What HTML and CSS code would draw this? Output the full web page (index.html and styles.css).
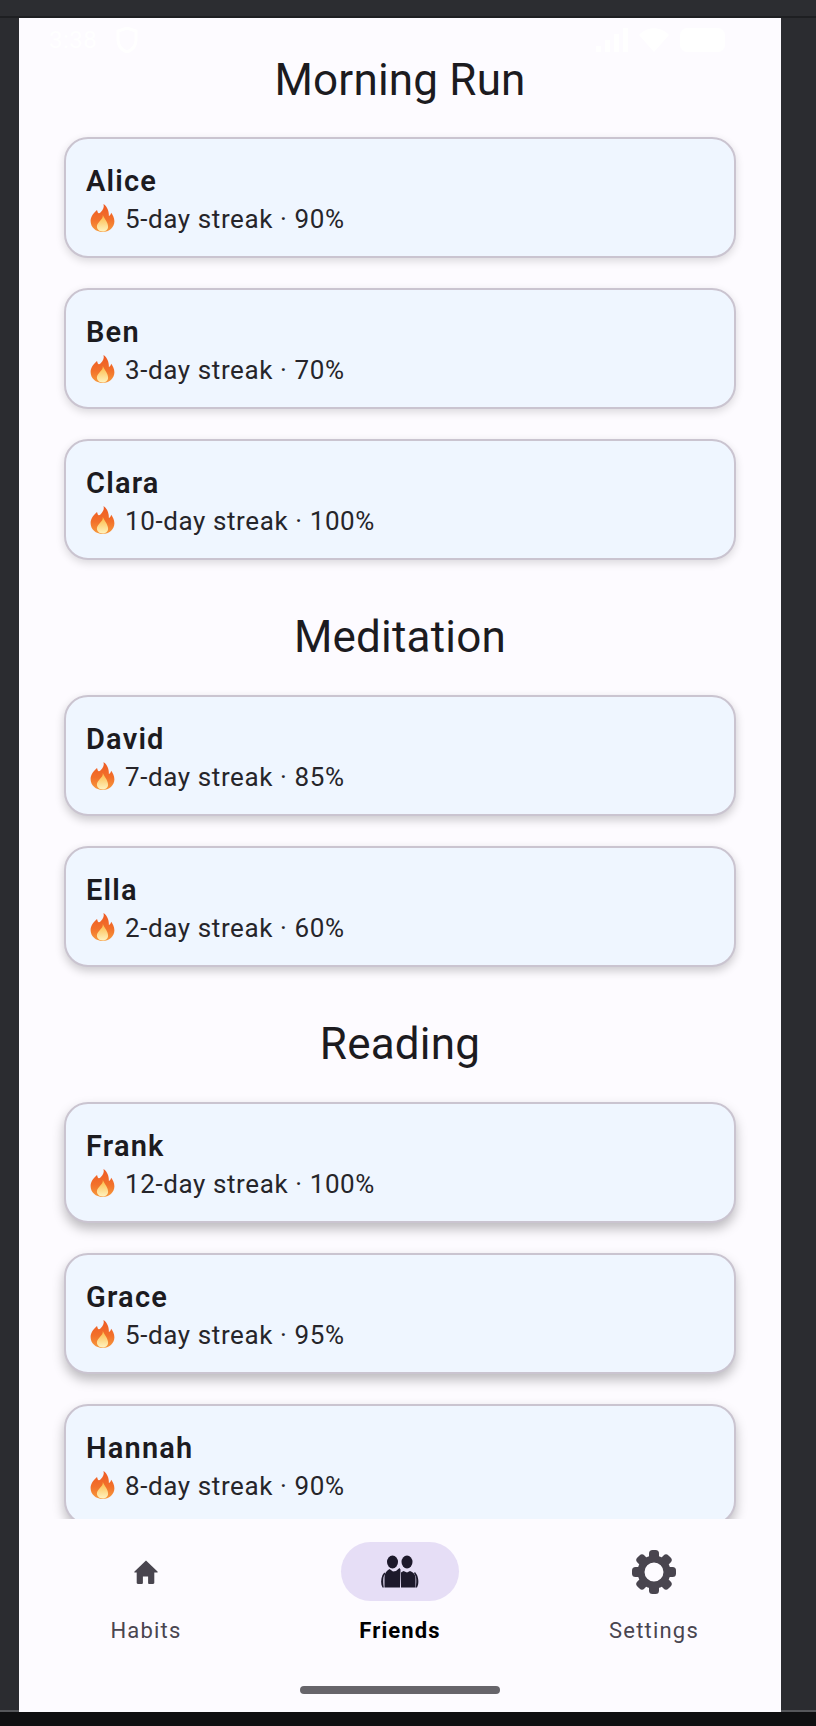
FILE: index.html
```html
<!DOCTYPE html>
<html lang="en">
<head>
<meta charset="utf-8">
<title>Friends</title>
<link rel="stylesheet" href="styles.css">
</head>
<body>
<svg class="defs" width="0" height="0" aria-hidden="true">
  <defs>
    <linearGradient id="flame" x1="0" y1="0" x2="0" y2="1">
      <stop offset="0" stop-color="#ee5a24"/>
      <stop offset="0.55" stop-color="#f2702a"/>
      <stop offset="1" stop-color="#f79a3c"/>
    </linearGradient>
    <linearGradient id="core" x1="0" y1="0" x2="0" y2="1">
      <stop offset="0" stop-color="#fcb843"/>
      <stop offset="1" stop-color="#fff3c0"/>
    </linearGradient>
    <symbol id="fire" viewBox="0 0 25 28">
      <path fill="url(#flame)" d="M13.5 0c.9 3.4-.4 5.6-2.600 8C9.600 9.400 8.400 10 7.700 8.200 7.400 7.400 7.300 6.800 7 6 3.400 9 .6 12.700.6 17.100.6 23.500 5.800 28 12.500 28s11.900-4.500 11.900-10.700c0-3.800-1.700-6.200-3.200-8.500-.4 1.600-1 2.700-2.300 3.300C19 7.200 17.400 2.700 13.500 0z"/>
      <path fill="url(#core)" d="M12.800 11c.3 2.800-1.300 4.300-3.100 6.300-1.400 1.600-2.800 3.200-2.800 5.300 0 3 2.500 4.900 5.600 4.900s5.600-1.900 5.600-4.800c0-3.900-3.100-7.100-5.300-11.700z"/>
    </symbol>
  </defs>
</svg>
<div class="topbar"></div>
<div class="frame">
  <main class="app">
    <div class="statusbar">
      <div class="status-left">
        <span class="clock">3:38</span>
        <svg class="shield" width="22" height="26" viewBox="0 0 22 26"><path d="M11 1 2 4v9c0 6 4 10 9 12 5-2 9-6 9-12V4z" fill="none" stroke="#fff" stroke-width="3"/></svg>
      </div>
      <div class="status-right">
        <svg width="32" height="24" viewBox="0 0 32 24"><path fill="#fff" d="M0 24v-6h5v6zM9 24V12h5v12zM18 24V6h5v18zM27 24V0h5v24z"/></svg>
        <svg width="30" height="24" viewBox="0 0 30 24"><path fill="#fff" d="M15 24 0 7c8-9 22-9 30 0z"/></svg>
        <span class="battery"></span>
      </div>
    </div>
    <div class="scroll">
      <section class="group">
        <h2 class="group-title">Morning Run</h2>
        <div class="cards">
          <article class="card shadow-a"><h3 class="name">Alice</h3><p class="stat"><svg class="fire"><use href="#fire"/></svg>5-day streak · 90%</p></article>
          <article class="card shadow-a"><h3 class="name">Ben</h3><p class="stat"><svg class="fire"><use href="#fire"/></svg>3-day streak · 70%</p></article>
          <article class="card shadow-a"><h3 class="name">Clara</h3><p class="stat"><svg class="fire"><use href="#fire"/></svg>10-day streak · 100%</p></article>
        </div>
      </section>
      <section class="group">
        <h2 class="group-title">Meditation</h2>
        <div class="cards">
          <article class="card shadow-b"><h3 class="name">David</h3><p class="stat"><svg class="fire"><use href="#fire"/></svg>7-day streak · 85%</p></article>
          <article class="card shadow-b"><h3 class="name">Ella</h3><p class="stat"><svg class="fire"><use href="#fire"/></svg>2-day streak · 60%</p></article>
        </div>
      </section>
      <section class="group">
        <h2 class="group-title">Reading</h2>
        <div class="cards">
          <article class="card shadow-c"><h3 class="name">Frank</h3><p class="stat"><svg class="fire"><use href="#fire"/></svg>12-day streak · 100%</p></article>
          <article class="card shadow-c"><h3 class="name">Grace</h3><p class="stat"><svg class="fire"><use href="#fire"/></svg>5-day streak · 95%</p></article>
          <article class="card shadow-c"><h3 class="name">Hannah</h3><p class="stat"><svg class="fire"><use href="#fire"/></svg>8-day streak · 90%</p></article>
        </div>
      </section>
    </div>
    <nav class="nav">
      <div class="tabs">
        <div class="tab">
          <div class="tab-icon">
            <svg width="26" height="26" viewBox="0 0 26 26"><path fill="#49454f" d="M13 1.500 1.500 12.400c-.5.500-.2 1.200.5 1.200h1.700v10.200c0 .7.500 1.200 1.200 1.200h4.100c.5 0 .9-.4.900-.9v-6.600h5.200v6.600c0 .5.400.9.900.9h4.100c.7 0 1.200-.5 1.200-1.200V13.600H24c.7 0 1-.7.500-1.200z"/></svg>
          </div>
          <span class="tab-label">Habits</span>
        </div>
        <div class="tab tab-active">
          <div class="tab-icon tab-pill">
            <svg width="40" height="33" viewBox="0 0 40 33"><g fill="#1d192b"><ellipse cx="12.500" cy="7" rx="5.500" ry="6.500"/><ellipse cx="27" cy="7" rx="5.500" ry="6.500"/><path d="M4.500 32.500V22c0-3.500 2-6.500 5-8l3.500 2.500 3-.5 3.500-3 1 1.500-.5 18z"/><path d="M21 32.500V17.500l2.500-1.500 3.500 1.500 3-1.500c3 1 5 3 5.500 6V32.500z"/><path d="M2.500 32.500C.5 29 .8 24 2.500 20l1.800-2.500 1 1-1.800 3.500c-.5 3.500-.3 7 .3 10.500zM37 32.500c2-3.500 1.700-8.500 0-12.500l-2-3-1 1 2 4c.5 3.500.3 7-.3 10.500z"/></g></svg>
          </div>
          <span class="tab-label">Friends</span>
        </div>
        <div class="tab">
          <div class="tab-icon">
            <svg width="46" height="46" viewBox="-23 -23 46 46"><g fill="#49454f"><rect x="-5" y="-22" width="10" height="12" rx="3.500"/><rect x="-5" y="-22" width="10" height="12" rx="3.500" transform="rotate(45)"/><rect x="-5" y="-22" width="10" height="12" rx="3.500" transform="rotate(90)"/><rect x="-5" y="-22" width="10" height="12" rx="3.500" transform="rotate(135)"/><rect x="-5" y="-22" width="10" height="12" rx="3.500" transform="rotate(180)"/><rect x="-5" y="-22" width="10" height="12" rx="3.500" transform="rotate(225)"/><rect x="-5" y="-22" width="10" height="12" rx="3.500" transform="rotate(270)"/><rect x="-5" y="-22" width="10" height="12" rx="3.500" transform="rotate(315)"/></g><circle r="13" fill="none" stroke="#49454f" stroke-width="7"/></svg>
          </div>
          <span class="tab-label">Settings</span>
        </div>
      </div>
      <div class="home-bar"></div>
    </nav>
  </main>
</div>
<div class="bottombar"></div>
</body>
</html>
```
FILE: styles.css
```css
* { box-sizing: border-box; }
html, body { margin: 0; padding: 0; }
body {
  width: 816px;
  height: 1726px;
  overflow: hidden;
  background: #2b2c30;
  font-family: Roboto, "Liberation Sans", sans-serif;
  display: flex;
  flex-direction: column;
}
.defs { position: absolute; }
.topbar {
  height: 18px;
  flex: none;
  background: #2c2d31;
  border-bottom: 2px solid #1e1f22;
}
.frame {
  height: 1694px;
  flex: none;
  padding: 0 35px 0 19px;
  border-bottom: 2px solid #55565a;
}
.app {
  position: relative;
  width: 762px;
  height: 1692px;
  margin-bottom: -2px;
  background: #fdfbff;
  display: flex;
  flex-direction: column;
}
.bottombar { flex: 1; background: #0f0f11; }

.statusbar {
  position: absolute;
  top: 10px;
  left: 30px;
  right: 56px;
  height: 24px;
  display: flex;
  justify-content: space-between;
  align-items: center;
  z-index: 1;
}
.status-left, .status-right { display: flex; align-items: center; }
.status-left { gap: 19px; }
.status-right { gap: 11px; }
.clock { color: #fff; font-size: 24px; letter-spacing: 0.5px; }
.battery { width: 45px; height: 24px; border-radius: 7px; background: #fff; }

.scroll {
  height: 1501px;
  flex: none;
  overflow: hidden;
  padding: 0 45px;
}
.group { display: flex; flex-direction: column; }
.group-title {
  margin: 0;
  padding-top: 32px;
  height: 119px;
  font-size: 44px;
  line-height: 60px;
  letter-spacing: 0.2px;
  font-weight: 400;
  text-align: center;
  color: #1c1b1f;
}
.group + .group .group-title { height: 135px; padding-top: 47px; }
.cards { display: flex; flex-direction: column; gap: 30px; }
.card {
  height: 121px;
  padding: 23px 20px 0;
  border: 2px solid #cac4d0;
  border-radius: 24px;
  background: #eff6ff;
}
.shadow-a { box-shadow: 0 3px 8px rgba(0, 0, 0, 0.14); }
.shadow-b { box-shadow: 0 4px 10px rgba(0, 0, 0, 0.2); }
.shadow-c { box-shadow: 0 6px 12px rgba(0, 0, 0, 0.26); }
.name {
  margin: 0;
  font-size: 29px;
  line-height: 38px;
  font-weight: 600;
  letter-spacing: 1.2px;
  color: #1c1b1f;
}
.stat {
  margin: 0;
  display: flex;
  align-items: center;
  font-size: 26px;
  line-height: 39px;
  letter-spacing: 0.6px;
  color: #26252a;
}
.fire { width: 25px; height: 28px; margin: 0 10px 4px 4px; flex: none; }

.nav {
  position: relative;
  z-index: 2;
  height: 193px;
  flex: none;
  padding-top: 23px;
  background: #fdfbff;
  display: flex;
  flex-direction: column;
  align-items: center;
}
.tabs { width: 100%; display: grid; grid-template-columns: repeat(3, 1fr); }
.tab { display: flex; flex-direction: column; align-items: center; gap: 15px; }
.tab-icon {
  width: 118px;
  height: 59px;
  border-radius: 30px;
  display: flex;
  align-items: center;
  justify-content: center;
}
.tab-pill { background: #e6def6; }
.tab-label {
  font-size: 22px;
  line-height: 30px;
  font-weight: 450;
  letter-spacing: 1.2px;
  color: #49454f;
}
.tab-active .tab-label { font-weight: 700; letter-spacing: 1.1px; color: #000; }
.home-bar {
  width: 200px;
  height: 8px;
  margin-top: 40px;
  border-radius: 4px;
  background: #67656b;
}
```
